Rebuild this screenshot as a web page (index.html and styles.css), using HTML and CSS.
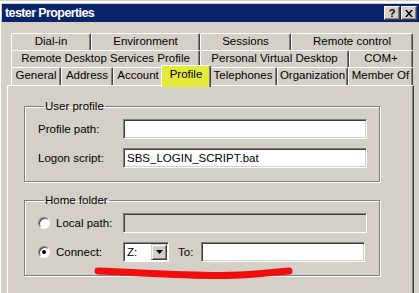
FILE: index.html
```html
<!DOCTYPE html>
<html lang="en">
<head>
    <meta charset="UTF-8">
    <title>tester Properties</title>
    <link rel="stylesheet" href="styles.css">
</head>
<body>
    <div class="window">
        <div class="titlebar">
            <span class="title">tester Properties</span>
            <div class="caption-btns">
                <span class="cap-btn">?</span>
                <span class="cap-btn cap-close">
                    <svg width="8" height="7" viewBox="0 0 8 7"><path d="M0 0h2l2 2.5 2-2.5h2l-3 3.5 3 3.5h-2l-2-2.5-2 2.5h-2l3-3.5z" fill="#000"/></svg>
                </span>
            </div>
        </div>

        <div class="tabs">
            <div class="tab-row row1">
                <div class="tab">Dial-in</div>
                <div class="tab">Environment</div>
                <div class="tab">Sessions</div>
                <div class="tab">Remote control</div>
            </div>
            <div class="tab-row row2">
                <div class="tab">Remote Desktop Services Profile</div>
                <div class="tab">Personal Virtual Desktop</div>
                <div class="tab">COM+</div>
            </div>
            <div class="tab-row row3">
                <div class="tab">General</div>
                <div class="tab">Address</div>
                <div class="tab">Account</div>
                <div class="tab active">Profile</div>
                <div class="tab">Telephones</div>
                <div class="tab">Organization</div>
                <div class="tab">Member Of</div>
            </div>
        </div>

        <div class="panel">
            <fieldset class="group group-profile">
                <legend>User profile</legend>
                <div class="field-row">
                    <label>Profile path:</label>
                    <div class="textbox wide"></div>
                </div>
                <div class="field-row">
                    <label>Logon script:</label>
                    <div class="textbox wide">SBS_LOGIN_SCRIPT.bat</div>
                </div>
            </fieldset>

            <fieldset class="group group-home">
                <legend>Home folder</legend>
                <div class="field-row">
                    <span class="radio"></span>
                    <label class="radio-label">Local path:</label>
                    <div class="textbox wide disabled"></div>
                </div>
                <div class="field-row">
                    <span class="radio checked"></span>
                    <label class="radio-label">Connect:</label>
                    <div class="combo">
                        <span class="combo-value">Z:</span>
                        <span class="combo-btn">
                            <svg width="7" height="4" viewBox="0 0 7 4"><path d="M0 0h7l-3.5 4z" fill="#000"/></svg>
                        </span>
                    </div>
                    <label class="to-label">To:</label>
                    <div class="textbox to-box"></div>
                </div>
            </fieldset>
        </div>
    </div>

    <svg class="markup" width="419" height="293" viewBox="0 0 419 293">
        <path d="M98 271 C150 273 200 277 240 275 C262 274 278 272 289 271" fill="none" stroke="#f20d0d" stroke-width="7" stroke-linecap="round"/>
    </svg>
</body>
</html>
```

FILE: styles.css
```css
body {
    margin: 0;
    width: 419px;
    height: 293px;
    overflow: hidden;
    background-color: #d4d0c8;
    font-family: Tahoma, "Liberation Sans", Arial, sans-serif;
    font-size: 11.5px;
    color: #000;
}
.window {
    height: 293px;
    box-sizing: border-box;
    padding: 3px 0 0 2px;
    border-top: 1px solid #d4d0c8;
    box-shadow: inset 1px 2px #fff;
}
.titlebar {
    height: 18px;
    background-color: #0a246a;
    display: flex;
    align-items: center;
    justify-content: space-between;
    padding: 0 2px 0 3px;
}
.title {
    color: #fff;
    font-weight: bold;
    font-size: 12.5px;
    letter-spacing: -0.6px;
}
.caption-btns {
    display: flex;
}
.cap-btn {
    width: 14px;
    height: 12px;
    background-color: #d4d0c8;
    border: 1px solid;
    border-color: #fff #404040 #404040 #fff;
    box-shadow: inset -1px -1px #808080;
    display: flex;
    align-items: center;
    justify-content: center;
    font-weight: bold;
    font-size: 11px;
    line-height: 12px;
}
.cap-close {
    margin-left: 1px;
}
.tabs {
    margin: 11px 0 0 9px;
    width: 402px;
}
.tab-row {
    display: grid;
    height: 17px;
}
.row1 {
    grid-template-columns: 80px 109px 91px 122px;
}
.row2 {
    grid-template-columns: 189px 149px 64px;
}
.row3 {
    grid-template-columns: 50px 52px 50px 46px 68px 71px 65px;
    height: 18px;
}
.tab {
    box-sizing: border-box;
    border-left: 1px solid #fff;
    border-top: 1px solid #fff;
    border-right: 1px solid #404040;
    border-top-left-radius: 2px;
    border-top-right-radius: 2px;
    box-shadow: inset -1px 0 #808080;
    text-align: center;
    line-height: 15px;
    white-space: nowrap;
}
.tab.active {
    position: relative;
    z-index: 1;
    margin: -2px;
    line-height: 17px;
    background-color: #e4ea3a;
}
.panel {
    margin-left: 5px;
    width: 407px;
    height: 220px;
    box-sizing: border-box;
    border-left: 1px solid #fff;
    border-top: 1px solid #fff;
    border-right: 1px solid #404040;
    box-shadow: inset -1px 0 #808080;
    padding: 14px 33px 0 16px;
}
.group {
    margin: 0;
    padding: 6px 0 13px 13px;
    border: 1px solid #808080;
    box-shadow: inset 1px 1px #fff, 1px 1px #fff;
}
.group legend {
    padding: 0 1px;
    margin-left: 6px;
    line-height: 13px;
}
.group-home {
    margin-top: 12px;
    padding-bottom: 13px;
}
.field-row {
    display: flex;
    align-items: center;
    height: 20px;
}
.field-row + .field-row {
    margin-top: 9px;
}
.field-row label {
    width: 85px;
}
.field-row .radio-label {
    width: 67px;
}
.textbox {
    box-sizing: border-box;
    height: 20px;
    background-color: #fff;
    border: 1px solid;
    border-color: #808080 #fff #fff #808080;
    box-shadow: inset 1px 1px #404040, inset -1px -1px #d4d0c8;
    padding: 2px 3px;
    line-height: 15px;
    white-space: nowrap;
}
.textbox.wide {
    width: 244px;
}
.textbox.disabled {
    background-color: #d4d0c8;
}
.radio {
    box-sizing: border-box;
    width: 12px;
    height: 12px;
    margin-right: 6px;
    border-radius: 50%;
    background-color: #fff;
    border: 1px solid;
    border-color: #808080 #fff #fff #808080;
    box-shadow: inset 1px 1px #404040;
    display: flex;
    align-items: center;
    justify-content: center;
}
.radio.checked::after {
    content: "";
    width: 4px;
    height: 4px;
    border-radius: 50%;
    background-color: #000;
}
.combo {
    box-sizing: border-box;
    width: 46px;
    height: 20px;
    display: flex;
    align-items: center;
    justify-content: space-between;
    background-color: #fff;
    border: 1px solid;
    border-color: #808080 #fff #fff #808080;
    box-shadow: inset 1px 1px #404040;
    padding: 1px 1px 1px 3px;
}
.combo-btn {
    box-sizing: border-box;
    width: 16px;
    height: 16px;
    background-color: #d4d0c8;
    border: 1px solid;
    border-color: #d4d0c8 #404040 #404040 #d4d0c8;
    box-shadow: inset 1px 1px #fff, inset -1px -1px #808080;
    display: flex;
    align-items: center;
    justify-content: center;
}
.field-row .to-label {
    width: auto;
    margin: 0 8px 0 9px;
}
.textbox.to-box {
    width: 164px;
}
.markup {
    position: absolute;
    left: 0;
    top: 0;
    pointer-events: none;
}
```
